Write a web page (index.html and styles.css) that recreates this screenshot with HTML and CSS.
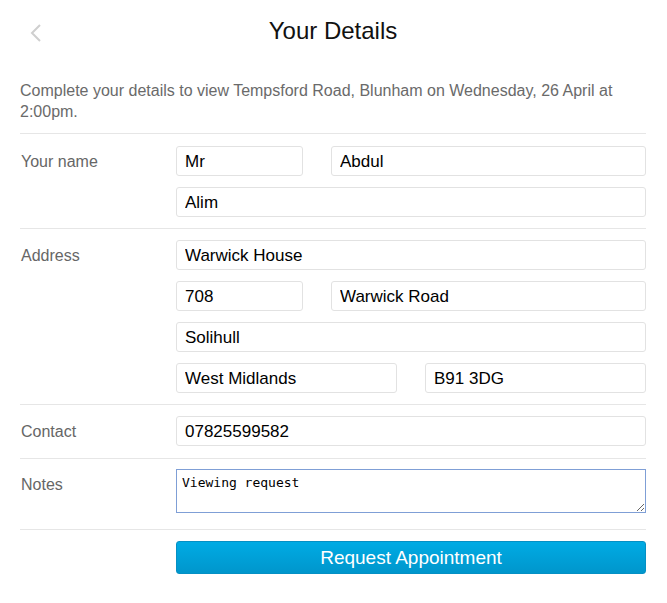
FILE: index.html
```html
<!DOCTYPE html>
<html>
<head>
<meta charset="utf-8">
<link rel="stylesheet" href="styles.css">
</head>
<body>
<div class="page">
  <header class="header">
    <a class="back" href="#"><svg width="14" height="20" viewBox="0 0 14 20"><polyline points="11,2 3,10 11,18" fill="none" stroke="#cfcfcf" stroke-width="2"/></svg></a>
    <h1 class="title">Your Details</h1>
  </header>
  <p class="intro">Complete your details to view Tempsford Road, Blunham on Wednesday, 26 April at 2:00pm.</p>
  <section class="section">
    <div class="label">Your name</div>
    <div class="fields">
      <div class="row split-small"><input class="input" value="Mr"><input class="input" value="Abdul"></div>
      <div class="row"><input class="input" value="Alim"></div>
    </div>
  </section>
  <section class="section address">
    <div class="label">Address</div>
    <div class="fields">
      <div class="row"><input class="input" value="Warwick House"></div>
      <div class="row split-small"><input class="input" value="708"><input class="input" value="Warwick Road"></div>
      <div class="row"><input class="input" value="Solihull"></div>
      <div class="row split-half"><input class="input" value="West Midlands"><input class="input" value="B91 3DG"></div>
    </div>
  </section>
  <section class="section">
    <div class="label">Contact</div>
    <div class="fields">
      <div class="row"><input class="input" value="07825599582"></div>
    </div>
  </section>
  <section class="section notes">
    <div class="label">Notes</div>
    <div class="fields">
      <textarea class="textarea">Viewing request</textarea>
    </div>
  </section>
  <section class="section last">
    <div class="label"></div>
    <div class="fields">
      <button class="button">Request Appointment</button>
    </div>
  </section>
</div>
</body>
</html>
```
FILE: styles.css
```css
* { box-sizing: border-box; }
html, body { margin: 0; padding: 0; background: #fff; }
body { font-family: "Liberation Sans", Arial, sans-serif; }
.page { padding: 0 21px 0 20px; }
.header {
  position: relative;
  height: 62px;
  display: flex;
  align-items: center;
  justify-content: center;
}
.back {
  position: absolute;
  left: 9px;
  top: 23px;
  display: block;
  width: 14px;
  height: 20px;
}
.back svg { display: block; }
.title {
  margin: 0;
  font-size: 24px;
  font-weight: normal;
  color: #111;
  line-height: 62px;
}
.intro {
  margin: 18px 0 0;
  padding-bottom: 11px;
  font-size: 16px;
  line-height: 21px;
  color: #6a6a6a;
  border-bottom: 1px solid #e6e6e6;
}
.section {
  display: flex;
  padding: 12px 0 11px;
  border-bottom: 1px solid #e6e6e6;
}
.section + .section { padding-top: 11px; }
.section.notes { padding-top: 10px; padding-bottom: 16px; }
.section.last { border-bottom: none; }
.label {
  width: 156px;
  flex: none;
  font-size: 16px;
  line-height: 30px;
  padding-top: 1px;
  color: #666;
  padding-left: 1px;
}
.fields {
  flex: 1;
  display: flex;
  flex-direction: column;
  gap: 11px;
}
.row { display: grid; grid-template-columns: 1fr; gap: 28px; }
.row.split-small { grid-template-columns: 127px 1fr; }
.row.split-half { grid-template-columns: 1fr 1fr; }
.input {
  display: block;
  width: 100%;
  height: 30px;
  border: 1px solid #e2e2e2;
  border-radius: 3px;
  padding: 1px 8px 0;
  font-family: "Liberation Sans", Arial, sans-serif;
  font-size: 17px;
  color: #000;
  background: #fff;
  outline: none;
}
.textarea {
  display: block;
  width: 100%;
  height: 44px;
  border: 1px solid #7f9fd6;
  border-radius: 0;
  padding: 5px 5px 3px;
  font-family: "DejaVu Sans Mono", monospace;
  font-size: 13px;
  line-height: 16px;
  color: #000;
  outline: none;
  margin: 0;
}
.button {
  display: block;
  width: 100%;
  height: 33px;
  border: 1px solid #0590c4;
  border-radius: 3px;
  background: linear-gradient(#00abe4, #0096cc);
  color: #fff;
  font-family: "Liberation Sans", Arial, sans-serif;
  font-size: 19px;
  padding: 0;
  cursor: pointer;
}
```
